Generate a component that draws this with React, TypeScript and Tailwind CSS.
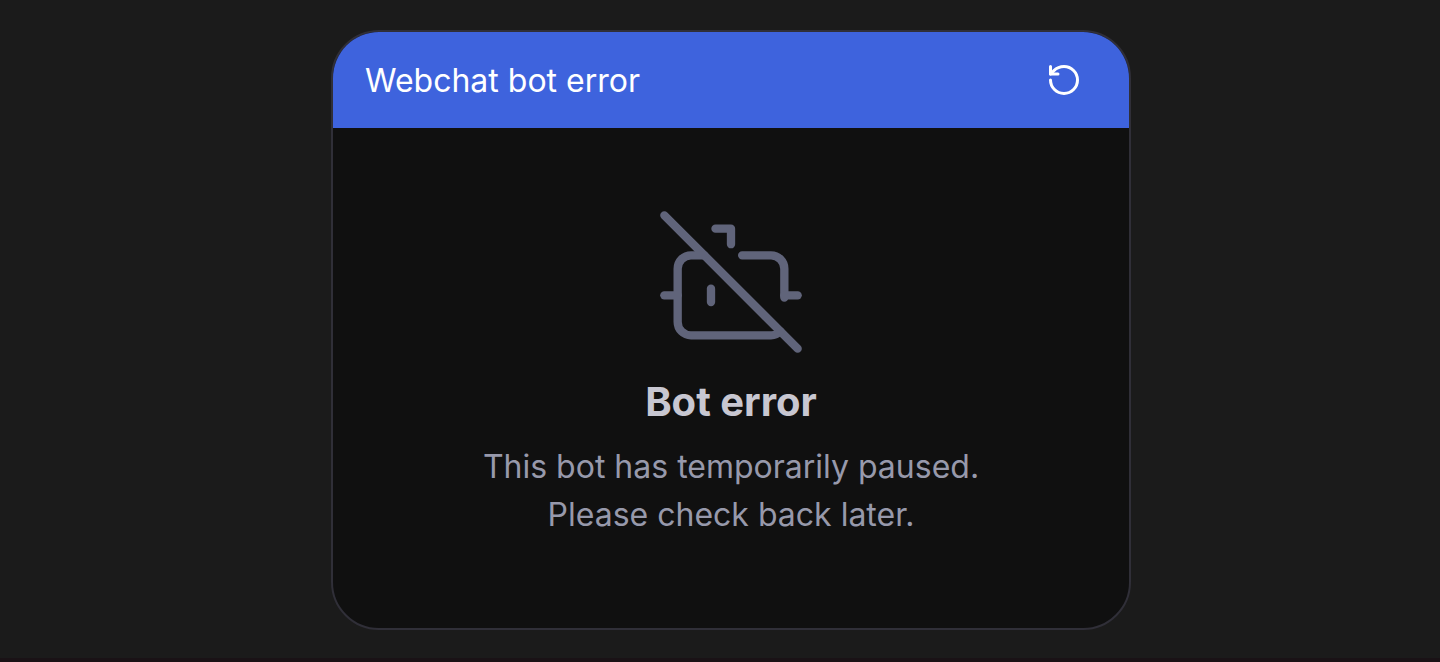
import React from 'react';
import { BotOff, RotateCcw } from 'lucide-react';

interface WebchatErrorProps {
  title: string;
  heading: string;
  message: string[];
  onRestart?: () => void;
}

const WebchatError: React.FC<WebchatErrorProps> = ({ title, heading, message, onRestart }) => {
  return (
    <section className="flex w-full max-w-[800px] flex-col overflow-hidden rounded-[48px] border-2 border-[#302f38] bg-[#101010]">
      {/* Header */}
      <header className="flex items-center justify-between bg-[#3e63dd] pt-[25px] pr-[47px] pb-[23px] pl-8">
        <h1 className="text-[32px] leading-[48px] text-white">{title}</h1>
        <button
          type="button"
          aria-label="Restart conversation"
          onClick={onRestart}
          className="rounded-lg pb-0.5 text-white"
        >
          <RotateCcw className="size-9" />
        </button>
      </header>

      {/* Error message */}
      <div className="flex flex-col items-center px-8 pt-[74px] pb-[89px] text-center">
        <BotOff className="size-40 text-[#60647a]" strokeWidth={1.25} />
        <h2 className="mt-3 text-[40px] leading-[56px] font-bold text-[#c8c7d1]">{heading}</h2>
        <p className="mt-[13px] text-[32px] leading-[48px] text-[#9799ab]">
          {message.map((line) => (
            <span key={line} className="block">{line}</span>
          ))}
        </p>
      </div>
    </section>
  );
};

const App: React.FC = () => {
  return (
    <main className="flex min-h-screen justify-center border-b-4 border-[#1a1216] bg-[#1b1b1b] px-4 pt-[30px] pb-7 pl-[38px] font-[Inter,sans-serif]">
      <WebchatError
        title="Webchat bot error"
        heading="Bot error"
        message={['This bot has temporarily paused.', 'Please check back later.']}
      />
    </main>
  );
};

export default App;
